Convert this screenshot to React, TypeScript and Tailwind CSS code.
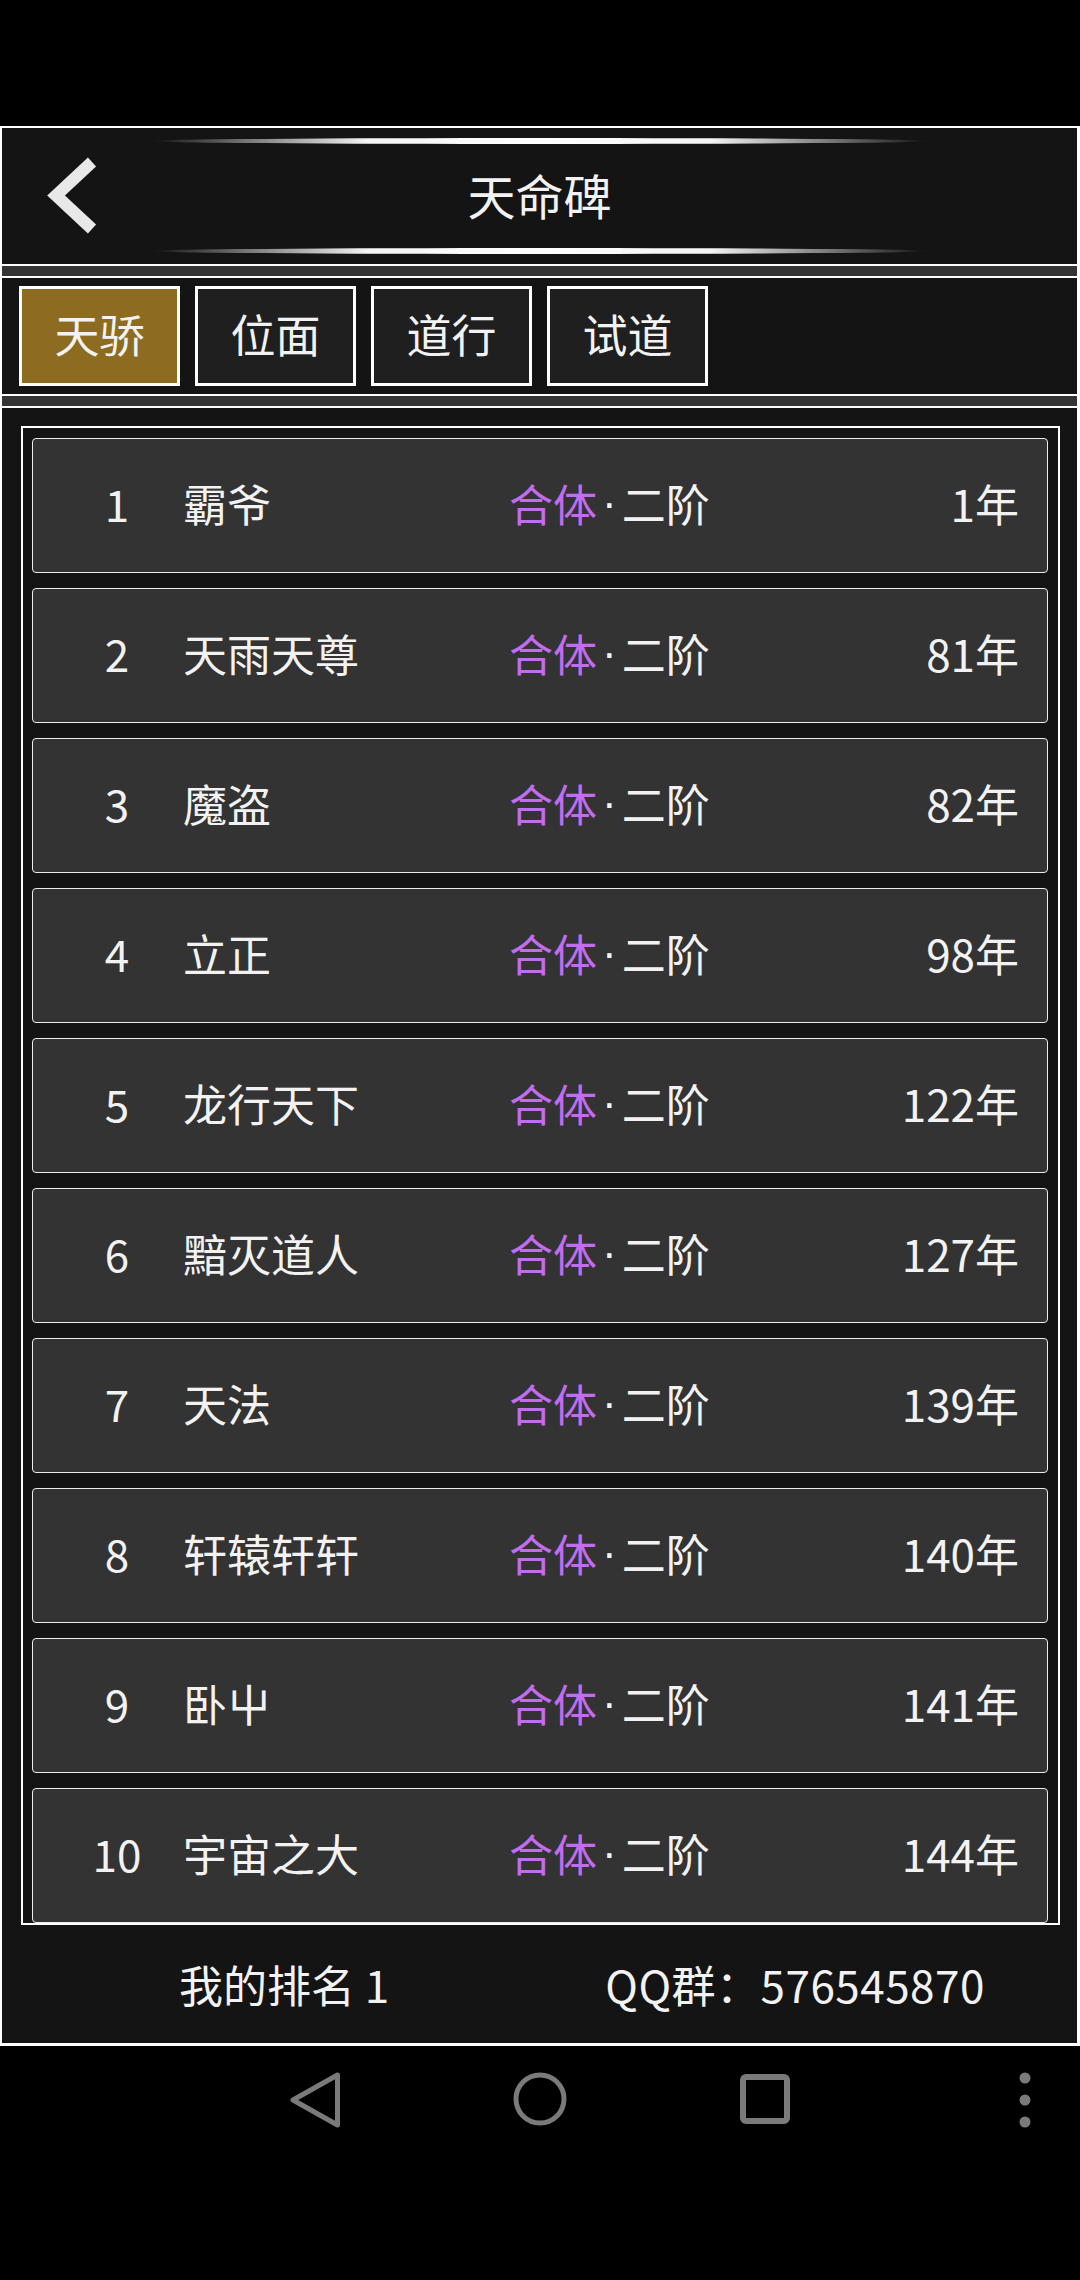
import React from "react";

interface RankRow {
  rank: number;
  name: string;
  years: number;
}

const rows: RankRow[] = [
  { rank: 1, name: "霸爷", years: 1 },
  { rank: 2, name: "天雨天尊", years: 81 },
  { rank: 3, name: "魔盗", years: 82 },
  { rank: 4, name: "立正", years: 98 },
  { rank: 5, name: "龙行天下", years: 122 },
  { rank: 6, name: "黯灭道人", years: 127 },
  { rank: 7, name: "天法", years: 139 },
  { rank: 8, name: "轩辕轩轩", years: 140 },
  { rank: 9, name: "卧屮", years: 141 },
  { rank: 10, name: "宇宙之大", years: 144 },
];

const tabs = ["天骄", "位面", "道行", "试道"];

// glowing rule above and below the title
function GlowLine() {
  return (
    <div className="mx-auto h-[6px] w-[777px] rounded-[50%] bg-[linear-gradient(90deg,transparent,#f4f4f4_28%,#ffffff_50%,#f4f4f4_72%,transparent)]" />
  );
}

function Separator() {
  return <div className="h-[14px] border-y-2 border-white bg-[#353535]" />;
}

export default function App() {
  const activeTab = 0;

  return (
    <div className="flex h-[2280px] w-[1080px] flex-col bg-black font-['Noto_Sans_CJK_SC',sans-serif] text-[#f2f2f2]">
      {/* status bar area */}
      <div className="h-[126px] shrink-0" />

      {/* app frame */}
      <div className="flex h-[1920px] shrink-0 flex-col border-2 border-r-[3px] border-b-[3px] border-white bg-[#141414]">
        {/* Header */}
        <div className="flex h-[136px] flex-col pt-[10px] pb-[10px]">
          <GlowLine />
          <div className="grid flex-1 grid-cols-[1fr_auto_1fr] items-center">
            <div className="flex items-center">
              <svg width="60" height="80" viewBox="0 0 60 80" className="ml-[38px]">
                <polyline
                  points="52,6 16,39.5 52,73"
                  fill="none"
                  stroke="#e8e8e8"
                  strokeWidth="12"
                  strokeLinejoin="miter"
                />
              </svg>
            </div>
            <div className="pb-[5px] text-[48px] leading-none">天命碑</div>
            <div />
          </div>
          <GlowLine />
        </div>

        <Separator />

        {/* Tabs */}
        <div className="flex h-[116px] gap-[15px] pt-[8px] pl-[17px]">
          {tabs.map((t, i) => (
            <div
              key={t}
              className={`flex h-[100px] w-[161px] items-center justify-center border-[3px] border-white pb-[5px] text-[45px] leading-none ${
                i === activeTab ? "bg-[#8d6c21]" : "bg-[#1f1f1f]"
              }`}
            >
              {t}
            </div>
          ))}
        </div>

        <Separator />

        {/* Ranking list */}
        <div className="mt-[18px] mr-[17px] ml-[19px] flex flex-col gap-[15px] overflow-hidden border-2 border-white pt-[10px] pr-[10px] pl-[9px]">
          {rows.map((r) => (
            <div
              key={r.rank}
              className="flex h-[135px] shrink-0 items-center rounded-[4px] border border-[#ececec] bg-[#333333] pb-[5px] text-[44px] leading-none"
            >
              <div className="ml-[24px] w-[120px] text-center">{r.rank}</div>
              <div className="ml-[6px] w-[326px]">{r.name}</div>
              <div className="flex items-center">
                <span className="text-[#c26cf0]">合体</span>
                <span className="px-[5px] font-['Liberation_Sans',sans-serif]">·</span>
                <span>二阶</span>
              </div>
              <div className="mr-[28px] ml-auto">{r.years}年</div>
            </div>
          ))}
        </div>

        {/* Footer */}
        <div className="flex flex-1 items-center text-[44px] leading-none">
          <div className="ml-[177px]">我的排名 1</div>
          <div className="ml-[216px] tracking-[0.5px]">QQ群：576545870</div>
        </div>
      </div>

      {/* Android nav bar */}
      <div className="flex h-[234px] shrink-0 items-start pt-[26px]">
        <svg width="52" height="56" viewBox="0 0 52 56" className="ml-[289px]">
          <polygon
            points="48.5,3 4,28 48.5,53"
            fill="none"
            stroke="#7a7a7a"
            strokeWidth="5"
            strokeLinejoin="round"
          />
        </svg>
        <svg width="54" height="54" viewBox="0 0 54 54" className="ml-[172px]">
          <circle cx="27" cy="27" r="24" fill="none" stroke="#7a7a7a" strokeWidth="5" />
        </svg>
        <svg width="50" height="50" viewBox="0 0 50 50" className="mt-[2px] ml-[173px]">
          <rect x="3" y="3" width="44" height="44" rx="3" fill="none" stroke="#7a7a7a" strokeWidth="6" />
        </svg>
        <svg width="12" height="56" viewBox="0 0 12 56" className="ml-[229px]">
          <circle cx="6" cy="6" r="5.5" fill="#7a7a7a" />
          <circle cx="6" cy="28" r="5.5" fill="#7a7a7a" />
          <circle cx="6" cy="50" r="5.5" fill="#7a7a7a" />
        </svg>
      </div>
    </div>
  );
}
